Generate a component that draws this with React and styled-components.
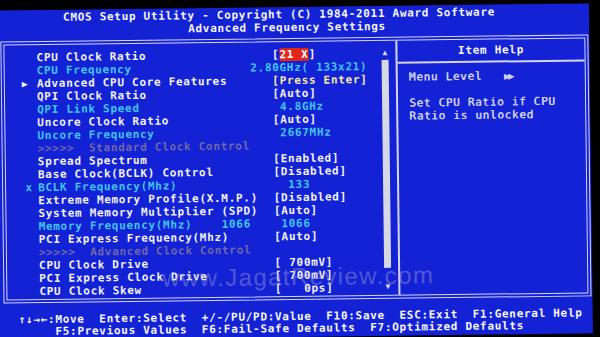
import React from "react";
import styled, { createGlobalStyle } from "styled-components";

const CH = 7.32;

const GlobalStyle = createGlobalStyle`
  html, body {
    margin: 0;
    padding: 0;
    background: #000;
    overflow: hidden;
  }
  body {
    font-family: "DejaVu Sans Mono", "Liberation Mono", monospace;
    font-size: 11px;
    letter-spacing: 0.7px;
    font-weight: bold;
  }
`;

const Screen = styled.div`
  position: relative;
  box-sizing: border-box;
  margin: 7px 0 0 -6px;
  padding-left: 6px;
  width: 597px;
  height: 330px;
  background: #1422d6;
  transform: rotate(-0.7deg);
  transform-origin: 300px 170px;
  display: flex;
  flex-direction: column;
`;

const Header = styled.header`
  padding-top: 1px;
  color: #f4f4fa;
`;

const TitleLine = styled.div`
  height: 13px;
  line-height: 13px;
  white-space: pre;
  padding-left: ${(p) => p.$indent}px;
`;

const Frame = styled.section`
  box-sizing: border-box;
  margin: 4px 0 0 2px;
  width: 588px;
  height: 262px;
  border: 4px double #d4d6f0;
  display: grid;
  grid-template-columns: 391px 1fr;
`;

const LeftPanel = styled.div`
  display: flex;
`;

const ItemList = styled.div`
  flex: 1;
  padding-top: 6px;
  display: flex;
  flex-direction: column;
`;

const toneColor = {
  item: "#f2f2f8",
  info: "#3fc6ee",
  section: "#6f68a6",
};

const Row = styled.div`
  display: grid;
  grid-template-columns: 32px 235.5px 1fr;
  height: 13px;
  line-height: 13px;
  white-space: pre;
  color: ${(p) => toneColor[p.$tone]};
`;

const Marker = styled.span`
  text-align: right;
  padding-right: ${(p) => p.$pad}px;
  font-size: ${(p) => p.$size}px;
  letter-spacing: 0;
  color: ${(p) => p.$color};
`;

const Label = styled.span`
  grid-column: ${(p) => (p.$wide ? "2 / 4" : "2 / 3")};
`;

const Value = styled.span`
  margin-left: ${(p) => p.$shift * CH}px;
  color: ${(p) => p.$color};
`;

const Selected = styled.span`
  background: #e2261a;
  color: #fff;
`;

const Scrollbar = styled.div`
  width: 7px;
  margin-right: 7px;
  padding-top: 6px;
  display: flex;
  flex-direction: column;
  align-items: center;
`;

const ScrollArrow = styled.div`
  height: 12px;
  line-height: 12px;
  font-size: 8px;
  letter-spacing: 0;
  color: #d8daf0;
`;

const ScrollThumb = styled.div`
  margin-top: 1px;
  width: 7px;
  height: 208px;
  background: #d6d8e4;
`;

const ScrollGap = styled.div`
  height: 13px;
`;

const HelpPanel = styled.aside`
  border-left: 2px solid #d4d6f0;
  display: flex;
  flex-direction: column;
`;

const HelpTitle = styled.div`
  height: 21px;
  line-height: 21px;
  border-bottom: 2px solid #d4d6f0;
  text-align: center;
  color: #f4f4fa;
`;

const HelpBody = styled.div`
  padding: 7px 0 0 11px;
  color: #cfd1ec;
  font-weight: normal;
  text-shadow: 0.5px 0 0 #cfd1ec;
`;

const HelpLine = styled.div`
  height: 13px;
  line-height: 13px;
  white-space: pre;
`;

const LevelArrows = styled.span`
  margin-left: ${3 * CH}px;
  font-size: 10px;
  letter-spacing: -2px;
`;

const Footer = styled.footer`
  margin-top: 11px;
  color: #f6f6fa;
`;

const FooterLine = styled.div`
  height: 12px;
  line-height: 12px;
  white-space: pre;
  padding-left: ${(p) => p.$indent}px;
`;

const Watermark = styled.div`
  position: absolute;
  left: 167px;
  top: 258px;
  font-family: "Liberation Sans", Arial, sans-serif;
  font-weight: normal;
  font-size: 24px;
  line-height: 24px;
  letter-spacing: 1.4px;
  color: rgba(175, 175, 205, 0.4);
  pointer-events: none;
`;

const rows = [
  { tone: "item", label: "CPU Clock Ratio", value: "sel" },
  { tone: "info", label: "CPU Frequency", value: "2.80GHz( 133x21)", shift: -3 },
  { tone: "item", label: "Advanced CPU Core Features", value: "[Press Enter]", color: "#f4eaa6", marker: "arrow" },
  { tone: "item", label: "QPI Clock Ratio", value: "[Auto]" },
  { tone: "info", label: "QPI Link Speed", value: " 4.8GHz" },
  { tone: "item", label: "Uncore Clock Ratio", value: "[Auto]" },
  { tone: "info", label: "Uncore Frequency", value: " 2667MHz" },
  { tone: "section", label: ">>>>>  Standard Clock Control" },
  { tone: "item", label: "Spread Spectrum", value: "[Enabled]" },
  { tone: "item", label: "Base Clock(BCLK) Control", value: "[Disabled]" },
  { tone: "info", label: "BCLK Frequency(Mhz)", value: "  133", marker: "x" },
  { tone: "item", label: "Extreme Memory Profile(X.M.P.)", value: "[Disabled]" },
  { tone: "item", label: "System Memory Multiplier (SPD)", value: "[Auto]" },
  { tone: "info", label: "Memory Frequency(Mhz)    1066", value: " 1066" },
  { tone: "item", label: "PCI Express Frequency(Mhz)", value: "[Auto]" },
  { tone: "section", label: ">>>>>  Advanced Clock Control" },
  { tone: "item", label: "CPU Clock Drive", value: "[ 700mV]" },
  { tone: "item", label: "PCI Express Clock Drive", value: "[ 700mV]" },
  { tone: "item", label: "CPU Clock Skew", value: "[   0ps]" },
];

function RowMarker({ kind }) {
  if (kind === "arrow")
    return (
      <Marker $pad={9} $size={10} $color="#f2f2f8">
        ▶
      </Marker>
    );
  if (kind === "x")
    return (
      <Marker $pad={6} $size={11} $color="#3fc6ee">
        x
      </Marker>
    );
  return <Marker $pad={0} $size={11} />;
}

function ItemRow({ row }) {
  if (row.tone === "section") {
    return (
      <Row $tone="section">
        <RowMarker />
        <Label $wide>{row.label}</Label>
      </Row>
    );
  }
  return (
    <Row $tone={row.tone}>
      <RowMarker kind={row.marker} />
      <Label>{row.label}</Label>
      {row.value === "sel" ? (
        <Value $shift={0} $color="#f4f4f8">
          [<Selected>21 X</Selected>]
        </Value>
      ) : (
        <Value $shift={row.shift || 0} $color={row.color}>
          {row.value}
        </Value>
      )}
    </Row>
  );
}

export default function App() {
  return (
    <>
      <GlobalStyle />
      <Screen>
        <Header>
          <TitleLine $indent={65}>
            CMOS Setup Utility - Copyright (C) 1984-2011 Award Software
          </TitleLine>
          <TitleLine $indent={190}>Advanced Frequency Settings</TitleLine>
        </Header>
        <Frame>
          <LeftPanel>
            <ItemList>
              {rows.map((r, i) => (
                <ItemRow key={i} row={r} />
              ))}
            </ItemList>
            <Scrollbar>
              <ScrollArrow>▲</ScrollArrow>
              <ScrollThumb />
              <ScrollGap />
              <ScrollArrow>▼</ScrollArrow>
            </Scrollbar>
          </LeftPanel>
          <HelpPanel>
            <HelpTitle>Item Help</HelpTitle>
            <HelpBody>
              <HelpLine>
                Menu Level
                <LevelArrows>▶▶</LevelArrows>
              </HelpLine>
              <HelpLine> </HelpLine>
              <HelpLine>Set CPU Ratio if CPU</HelpLine>
              <HelpLine>Ratio is unlocked</HelpLine>
            </HelpBody>
          </HelpPanel>
        </Frame>
        <Footer>
          <FooterLine $indent={17}>
            ↑↓→←:Move  Enter:Select  +/-/PU/PD:Value  F10:Save  ESC:Exit  F1:General Help
          </FooterLine>
          <FooterLine $indent={53.5}>
            F5:Previous Values  F6:Fail-Safe Defaults  F7:Optimized Defaults
          </FooterLine>
        </Footer>
        <Watermark>www.JagatReview.com</Watermark>
      </Screen>
    </>
  );
}
